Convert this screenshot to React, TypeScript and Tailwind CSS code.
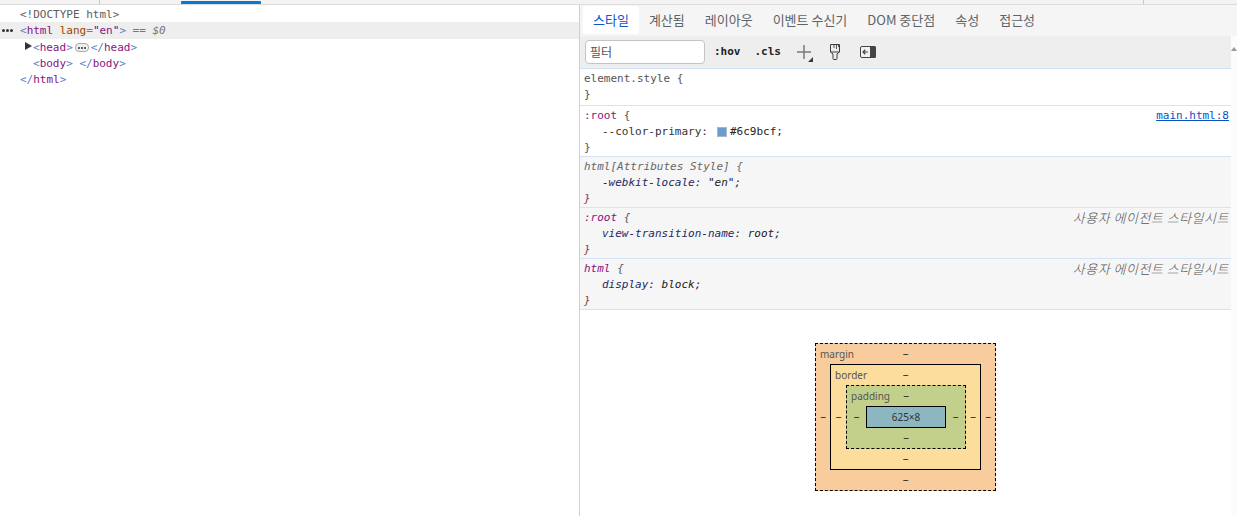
const mono = "font-['DejaVu_Sans_Mono','Liberation_Mono',monospace] text-[11px]"
const ko = "font-['Noto_Sans_CJK_KR',sans-serif]"

const tabs = ['스타일', '계산됨', '레이아웃', '이벤트 수신기', 'DOM 중단점', '속성', '접근성']

const Tag = ({ children }: { children: React.ReactNode }) => <span className="text-[#881280]">{children}</span>
const Angle = ({ children }: { children: React.ReactNode }) => <span className="text-[#5a7dc4]">{children}</span>

const Dots = ({ size }: { size: string }) => (
    <span className="inline-flex gap-[1px] items-center">
        <span className={`${size} bg-[#333] rounded-full`} />
        <span className={`${size} bg-[#333] rounded-full`} />
        <span className={`${size} bg-[#333] rounded-full`} />
    </span>
)

const RuleBlock = ({ gray, first, head, source, children }: { gray?: boolean; first?: boolean; head: React.ReactNode; source?: React.ReactNode; children?: React.ReactNode }) => (
    <div className={`border-b border-[#d6e2f5] pl-[4px] pr-[2px] pt-[2px] ${first ? 'pb-[2px]' : ''} ${gray ? 'bg-[#f6f6f6]' : 'bg-white'}`}>
        <div className="h-4 leading-4 flex justify-between whitespace-pre">
            <div>{head}</div>
            {source}
        </div>
        {children}
    </div>
)

const AgentSource = () => <span className={`${ko} italic font-light text-[13px] tracking-[0.5px] text-[#555]`}>사용자 에이전트 스타일시트</span>

const Dash = () => <span className="text-[#222] leading-none">‒</span>

const BoxLayer = ({ label, color, border, sideW, rightW, rowH, children }: { label: string; color: string; border: string; sideW: string; rightW?: string; rowH: string; children: React.ReactNode }) => (
    <div className={`flex flex-col ${color} ${border} text-[#333]`}>
        <div className={`relative flex items-center justify-center ${rowH}`}>
            <span className="absolute left-[4px] top-[2px] leading-4 text-[#555]">{label}</span>
            <Dash />
        </div>
        <div className="flex items-center">
            <div className={`flex justify-center ${sideW}`}><Dash /></div>
            {children}
            <div className={`flex justify-center ${rightW ?? sideW}`}><Dash /></div>
        </div>
        <div className={`flex items-center justify-center ${rowH}`}><Dash /></div>
    </div>
)

const PlusIcon = () => (
    <svg width="18" height="18" viewBox="0 0 18 18">
        <path d="M8 1v14M1 8h14" stroke="#7a7a7a" strokeWidth="1.500" fill="none" />
        <path d="M17 13v5h-5z" fill="#3a3a3a" />
    </svg>
)

const BrushIcon = () => (
    <svg width="14" height="18" viewBox="0 0 14 18" fill="none" stroke="#3c3c3c" strokeWidth="1">
        <path d="M2.500 1.500h9v7.500h-9z" />
        <path d="M2.500 9l2.500 2v4.500a1 1 0 0 0 1 1h2a1 1 0 0 0 1-1V11l2.500-2" />
        <path d="M6 2v3M8.500 2v4M10.500 2v2" stroke="#555" />
    </svg>
)

const SidebarIcon = () => (
    <svg width="16" height="12" viewBox="0 0 16 12">
        <rect x="0.5" y="0.5" width="15" height="11" rx="1.500" fill="#f2f2f2" stroke="#444" />
        <path d="M10 0h4.500A1.500 1.500 0 0 1 16 1.500v9a1.500 1.500 0 0 1-1.500 1.500H10z" fill="#444" />
        <path d="M3 6h5M5.300 3.800L3 6l2.300 2.200" stroke="#444" strokeWidth="1.200" fill="none" />
    </svg>
)

export default function App() {
    return (
        <div className="w-[1237px] h-[516px] overflow-hidden bg-white flex flex-col">
            <div className="h-[5px] shrink-0 flex bg-[#f3f3f3] border-b border-[#dcdcdc]">
                <div className="w-[100px] border-r border-[#c8c8c8]" />
                <div className="w-[81px]" />
                <div className="w-[80px] h-[3px] mt-[1px] bg-[#0b78d0] rounded-t-[1px]" />
                <div className="w-[883px] border-r border-[#c8c8c8]" />
            </div>
            <div className="flex flex-1 min-h-0">
                <div className={`w-[580px] shrink-0 border-r border-[#cfcfcf] pt-[1px] ${mono} text-[#222]`}>
                    <div className="h-4 leading-[18px] whitespace-pre pl-[20px]"><span className="text-[#5c5c5c]">{'<!DOCTYPE html>'}</span></div>
                    <div className="h-[17px] leading-[18px] whitespace-pre pl-[20px] relative bg-[#eeeeee]">
                        <span className="absolute left-[2px] top-[7px] flex"><Dots size="w-[3px] h-[3px]" /></span>
                        <Angle>{'<'}</Angle><Tag>html</Tag> <span className="text-[#994500]">lang</span><Angle>=</Angle><span className="text-[#1a1aa6]">"</span><Tag>en</Tag><span className="text-[#1a1aa6]">"</span><Angle>{'>'}</Angle>
                        <span className="italic text-[#777]"> == $0</span>
                    </div>
                    <div className="h-4 leading-[18px] whitespace-pre pl-[33px] relative flex">
                        <span className="absolute left-[25px] top-[3px] w-0 h-0 border-y-[4px] border-y-transparent border-l-[7px] border-l-[#333]" />
                        <Angle>{'<'}</Angle><Tag>head</Tag><Angle>{'>'}</Angle>
                        <span className="flex items-center justify-center w-[14px] h-[9px] mt-[4px] mx-[2px] rounded-[4px] border border-[#aaa] bg-[#eee]">
                            <Dots size="w-[2px] h-[2px]" />
                        </span>
                        <Angle>{'</'}</Angle><Tag>head</Tag><Angle>{'>'}</Angle>
                    </div>
                    <div className="h-4 leading-[18px] whitespace-pre pl-[33px]"><Angle>{'<'}</Angle><Tag>body</Tag><Angle>{'>'}</Angle> <Angle>{'</'}</Angle><Tag>body</Tag><Angle>{'>'}</Angle></div>
                    <div className="h-4 leading-[18px] whitespace-pre pl-[20px]"><Angle>{'</'}</Angle><Tag>html</Tag><Angle>{'>'}</Angle></div>
                </div>

                <div className="flex-1 min-w-0 flex flex-col">
                    <div className={`h-[31px] shrink-0 bg-[#f5f5f5] flex items-start pl-[3px] ${ko} text-[13px] text-[#5f6368]`}>
                        {tabs.map((tab, tIndex) => (
                            <div
                                key={tab}
                                className={`h-[28px] mt-[1px] flex items-center px-[10px] rounded-[2px] whitespace-pre ${tIndex === 0 ? 'bg-white text-[#0b57d0]' : ''}`}
                            >
                                {tab}
                            </div>
                        ))}
                    </div>
                    <div className="flex flex-1 min-h-0">
                        <div className="flex-1 min-w-0">
                            <div className="h-[33px] bg-[#eeeeee] border-b border-[#cfe0f7] flex items-center pl-[5px]">
                                <div className={`w-[120px] h-[24px] bg-white border border-[#c4c4c4] rounded-[4px] pl-[4px] flex items-center ${ko} text-[12px] text-[#555]`}>필터</div>
                                <span className={`ml-[9px] ${mono} font-bold text-[#222]`}>:hov</span>
                                <span className={`ml-[14px] ${mono} font-bold text-[#222]`}>.cls</span>
                                <div className="ml-[15px] mt-[1px] flex"><PlusIcon /></div>
                                <div className="ml-[14px] flex"><BrushIcon /></div>
                                <div className="ml-[18px] flex"><SidebarIcon /></div>
                            </div>
                            <div className={`${mono} text-[#222]`}>
                                <RuleBlock first head={<span className="text-[#555]">element.style {'{'}</span>}>
                                    <div className="h-4 leading-4 text-[#555]">{'}'}</div>
                                </RuleBlock>
                                <RuleBlock
                                    head={<span><span className="text-[#881280]">:root</span> <span className="text-[#555]">{'{'}</span></span>}
                                    source={<span className="underline text-[#0b4fc0]">main.html:8</span>}
                                >
                                    <div className="h-4 leading-4 pl-[18px] flex items-center whitespace-pre">
                                        <span className="text-[#333]">--color-primary:</span>
                                        <span className="w-[10px] h-[10px] ml-[9px] mr-[3px] bg-[#6c9bcf] border border-[#a9b8c9]" />
                                        <span>#6c9bcf;</span>
                                    </div>
                                    <div className="h-4 leading-4 text-[#555]">{'}'}</div>
                                </RuleBlock>
                                <RuleBlock gray head={<span className="italic text-[#666]">html[Attributes Style] {'{'}</span>}>
                                    <div className="h-4 leading-4 pl-[18px] italic whitespace-pre"><span className="text-[#222a66]">-webkit-locale</span>: "en";</div>
                                    <div className="h-4 leading-4 italic text-[#8a3a3a]">{'}'}</div>
                                </RuleBlock>
                                <RuleBlock gray head={<span className="italic"><span className="text-[#881280]">:root</span> <span className="text-[#555]">{'{'}</span></span>} source={<AgentSource />}>
                                    <div className="h-4 leading-4 pl-[18px] italic whitespace-pre"><span className="text-[#222a66]">view-transition-name</span>: root;</div>
                                    <div className="h-4 leading-4 italic text-[#8a3a3a]">{'}'}</div>
                                </RuleBlock>
                                <RuleBlock gray head={<span className="italic"><span className="text-[#881280]">html</span> <span className="text-[#555]">{'{'}</span></span>} source={<AgentSource />}>
                                    <div className="h-4 leading-4 pl-[18px] italic whitespace-pre"><span className="text-[#222a66]">display</span>: block;</div>
                                    <div className="h-4 leading-4 italic text-[#8a3a3a]">{'}'}</div>
                                </RuleBlock>
                            </div>
                            <div className="flex justify-center pt-[33px] font-['Noto_Sans',sans-serif] text-[10px]">
                                <BoxLayer label="margin" color="bg-[#f9cc9d]" border="border border-dashed border-black" sideW="w-[14px]" rowH="h-[20px]">
                                    <BoxLayer label="border" color="bg-[#fddd9b]" border="border border-black" sideW="w-[15px]" rightW="w-[14px]" rowH="h-[20px]">
                                        <BoxLayer label="padding" color="bg-[#c3d08b]" border="border border-dashed border-black" sideW="w-[19px]" rowH="h-[20px]">
                                            <div className="w-[80px] h-[22px] bg-[#8cb6c0] border border-black flex items-center justify-center text-[#333]">625×8</div>
                                        </BoxLayer>
                                    </BoxLayer>
                                </BoxLayer>
                            </div>
                        </div>
                        <div className="w-[6px] shrink-0 bg-[#fcfcfc] flex justify-center pt-[11px]">
                            <span className="w-0 h-0 border-x-[3px] border-x-transparent border-b-[4px] border-b-[#999]" />
                        </div>
                    </div>
                </div>
            </div>
        </div>
    )
}
